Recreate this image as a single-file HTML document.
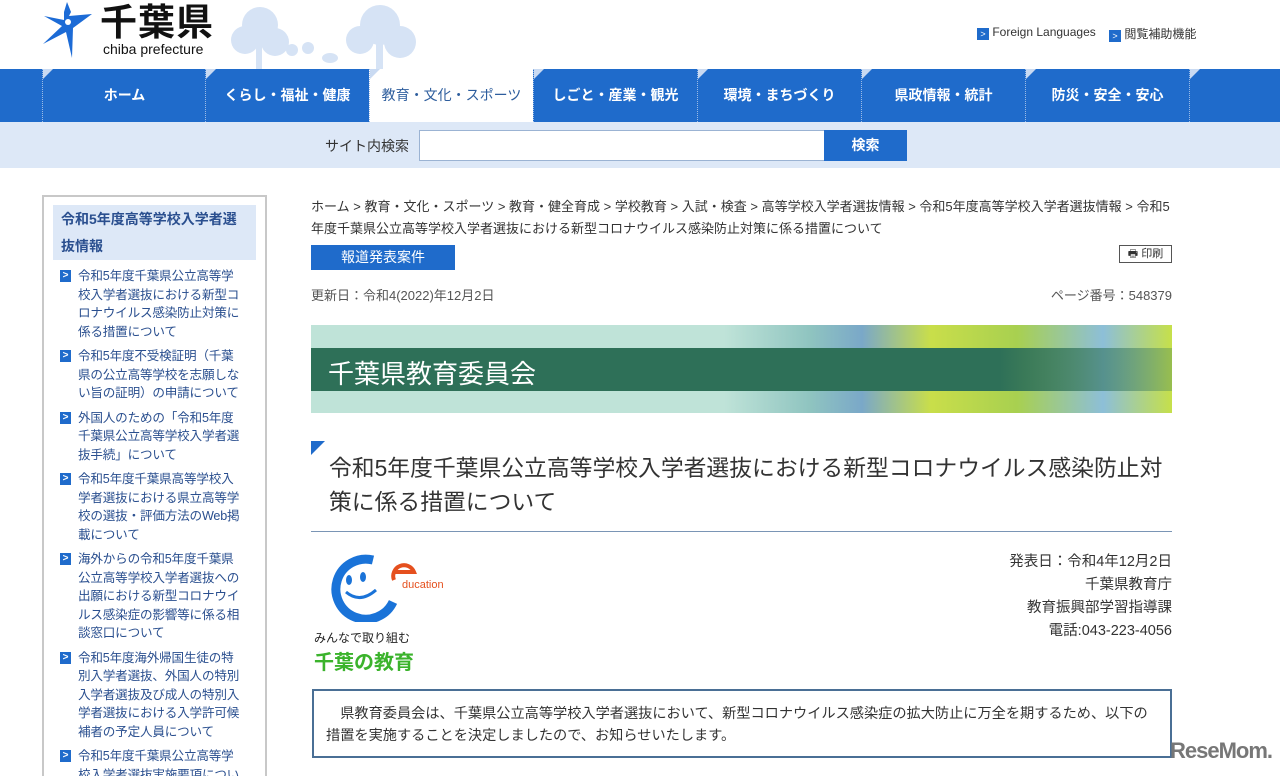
<!DOCTYPE html>
<html><head><meta charset="utf-8">
<style>
*{margin:0;padding:0;box-sizing:border-box}
html,body{width:1280px;height:776px;overflow:hidden}
body{background:#fff;font-family:"Liberation Sans","Noto Sans CJK JP",sans-serif;color:#333;position:relative}
.a{position:absolute}
a{color:#2a4f8f}
.nav{top:69px;left:0;width:1280px;height:53px;background:#1f6bcb}
.nav div{position:absolute;top:0;height:53px;width:164px;color:#fff;font-size:14px;font-weight:bold;text-align:center;line-height:53px;border-left:1px dotted #9bbbe6}
.nav div:before{content:"";position:absolute;left:0;top:0;border-top:10px solid #c9daf2;border-right:10px solid transparent}
.nav .on{background:#fff;color:#2d5d9d;font-weight:normal}
.srch{top:122px;left:0;width:1280px;height:46px;background:#dde8f7}
.side{left:42px;top:195px;width:225px;height:600px;border:2px solid #c8c8c8;border-bottom:none;overflow:hidden}
.side ul{list-style:none;position:absolute;left:34px;top:70px;width:166px}
.side li{font-size:12.6px;line-height:18.5px;margin-bottom:6px;position:relative;letter-spacing:-0.2px}
.side li a{color:#2a4f8f}
.side li:before{content:">";position:absolute;left:-18px;top:3px;width:11px;height:12px;background:#1f6bcb;color:#fff;font-size:10px;line-height:12px;text-align:center;font-weight:bold}
.bc{left:311px;top:196px;width:862px;font-size:13px;line-height:22px;color:#333}
.bc a{color:#333}
</style></head><body>
<svg class="a" style="left:40px;top:2px" width="56" height="58" viewBox="0 0 56 58"><path d="M27 0 L31 10 L29 14 L52 12 L33 26 L32 56 L26 30 L3 42 L22 24 L4 14 L24 18 L24 10 Z" fill="#1c6bd6"/><circle cx="28" cy="20" r="3" fill="#fff"/></svg>
<div class="a" style="left:100px;top:4px;font-size:37px;line-height:37px;font-weight:bold;color:#111;letter-spacing:1px">千葉県</div>
<div class="a" style="left:103px;top:41px;font-size:14px;line-height:16px;color:#111">chiba prefecture</div>
<svg class="a" style="left:220px;top:0" width="220" height="69"><g fill="#d6e3f5"><circle cx="40" cy="25" r="18"/><circle cx="25" cy="40" r="14"/><circle cx="55" cy="42" r="14"/><circle cx="160" cy="25" r="20"/><circle cx="140" cy="40" r="14"/><circle cx="180" cy="42" r="16"/><rect x="36" y="40" width="6" height="29"/><rect x="156" y="40" width="7" height="29"/><circle cx="72" cy="50" r="6"/><circle cx="88" cy="48" r="6"/><ellipse cx="110" cy="58" rx="8" ry="5"/></g></svg>
<div class="a" style="left:977px;top:25px;font-size:12px;color:#333"><span style="display:inline-block;width:12px;height:12px;background:#1f6bcb;color:#fff;font-size:9px;line-height:12px;text-align:center;vertical-align:-1px">&gt;</span> Foreign Languages</div>
<div class="a" style="left:1109px;top:25px;font-size:12px;color:#333"><span style="display:inline-block;width:12px;height:12px;background:#1f6bcb;color:#fff;font-size:9px;line-height:12px;text-align:center;vertical-align:-1px">&gt;</span> 閲覧補助機能</div>
<div class="a nav">
<div style="left:42px">ホーム</div>
<div style="left:205px">くらし・福祉・健康</div>
<div class="on" style="left:369px">教育・文化・スポーツ</div>
<div style="left:533px">しごと・産業・観光</div>
<div style="left:697px">環境・まちづくり</div>
<div style="left:861px">県政情報・統計</div>
<div style="left:1025px">防災・安全・安心</div>
<div style="left:1189px;width:91px"></div>
</div>
<div class="a srch"></div>
<div class="a" style="left:325px;top:136px;font-size:14px;color:#333">サイト内検索</div>
<div class="a" style="left:419px;top:130px;width:406px;height:31px;background:#fff;border:1px solid #9bb3d3"></div>
<div class="a" style="left:824px;top:130px;width:83px;height:31px;background:#1f6bcb;color:#fff;font-size:14px;font-weight:bold;text-align:center;line-height:31px">検索</div>
<div class="a side">
<div class="a" style="left:9px;top:8px;width:203px;height:55px;background:#dde8f7;font-size:14px;line-height:27px;padding:1px 8px;font-weight:bold"><a>令和5年度高等学校入学者選抜情報</a></div>
<ul>
<li><a>令和5年度千葉県公立高等学校入学者選抜における新型コロナウイルス感染防止対策に係る措置について</a></li>
<li><a>令和5年度不受検証明（千葉県の公立高等学校を志願しない旨の証明）の申請について</a></li>
<li><a>外国人のための「令和5年度千葉県公立高等学校入学者選抜手続」について</a></li>
<li><a>令和5年度千葉県高等学校入学者選抜における県立高等学校の選抜・評価方法のWeb掲載について</a></li>
<li><a>海外からの令和5年度千葉県公立高等学校入学者選抜への出願における新型コロナウイルス感染症の影響等に係る相談窓口について</a></li>
<li><a>令和5年度海外帰国生徒の特別入学者選抜、外国人の特別入学者選抜及び成人の特別入学者選抜における入学許可候補者の予定人員について</a></li>
<li><a>令和5年度千葉県公立高等学校入学者選抜実施要項について</a></li>
</ul>
</div>
<div class="a bc"><a>ホーム</a> &gt; <a>教育・文化・スポーツ</a> &gt; <a>教育・健全育成</a> &gt; <a>学校教育</a> &gt; <a>入試・検査</a> &gt; <a>高等学校入学者選抜情報</a> &gt; <a>令和5年度高等学校入学者選抜情報</a> &gt; 令和5年度千葉県公立高等学校入学者選抜における新型コロナウイルス感染防止対策に係る措置について</div>
<div class="a" style="left:311px;top:245px;width:144px;height:25px;background:#1f6bcb;color:#fff;font-size:14px;text-align:center;line-height:25px">報道発表案件</div>
<div class="a" style="left:1119px;top:245px;width:53px;height:18px;border:1px solid #555;font-size:11px;line-height:16px;text-align:center">🖶 印刷</div>
<div class="a" style="left:311px;top:285px;font-size:13px;color:#555">更新日：令和4(2022)年12月2日</div>
<div class="a" style="left:1000px;top:285px;width:172px;text-align:right;font-size:13px;color:#555">ページ番号：548379</div>
<div class="a" style="left:311px;top:325px;width:861px;height:88px;background:linear-gradient(90deg,#bfe3d8 0%,#bfe3d8 48%,#8fc4c0 58%,#7aa8c8 64%,#c9de4a 72%,#a8d050 82%,#8dbfd8 92%,#c6e04a 100%)"></div>
<div class="a" style="left:311px;top:348px;width:861px;height:43px;background:linear-gradient(90deg,#2e7058 0%,#2e7058 80%,rgba(46,112,88,.3) 100%)"></div>
<div class="a" style="left:328px;top:354px;font-size:26px;color:#fff">千葉県教育委員会</div>
<div class="a" style="left:311px;top:441px;border-top:14px solid #1f6bcb;border-right:14px solid transparent"></div>
<div class="a" style="left:329px;top:451px;white-space:nowrap;font-size:22.8px;line-height:34px;color:#333">令和5年度千葉県公立高等学校入学者選抜における新型コロナウイルス感染防止対<br>策に係る措置について</div>
<div class="a" style="left:311px;top:531px;width:861px;height:1px;background:#7a95b5"></div>
<svg class="a" style="left:318px;top:552px" width="140" height="70"><path d="M55 8 A30 30 0 1 0 75 50" fill="none" stroke="#1a73d8" stroke-width="9"/><ellipse cx="31" cy="28" rx="3" ry="5" fill="#1a73d8"/><ellipse cx="45" cy="25" rx="3" ry="5" fill="#1a73d8"/><path d="M28 40 Q42 52 58 38" fill="none" stroke="#1a73d8" stroke-width="3"/><path d="M76 28 A10 10 0 1 1 96 20 L76 20" fill="none" stroke="#e5501e" stroke-width="4"/><text x="84" y="36" font-size="11" fill="#e5501e" font-family="Liberation Sans">ducation</text></svg>
<div class="a" style="left:314px;top:629px;font-size:12px;color:#222">みんなで取り組む</div>
<div class="a" style="left:314px;top:646px;font-size:20px;font-weight:bold;color:#3bb32c">千葉の教育</div>
<div class="a" style="left:900px;top:551px;width:272px;text-align:right;font-size:14.5px;line-height:23px;color:#333">発表日：令和4年12月2日<br>千葉県教育庁<br>教育振興部学習指導課<br>電話:043-223-4056</div>
<div class="a" style="left:312px;top:689px;width:860px;height:69px;border:2px solid #4a6f95;padding:12px 12px 0 12px;font-size:14.2px;line-height:22px;color:#333">　県教育委員会は、千葉県公立高等学校入学者選抜において、新型コロナウイルス感染症の拡大防止に万全を期するため、以下の措置を実施することを決定しましたので、お知らせいたします。</div>
<div class="a" style="left:1170px;top:738px;font-size:22px;font-weight:bold;color:#777;letter-spacing:-1px">ReseMom.</div>
</body></html>
